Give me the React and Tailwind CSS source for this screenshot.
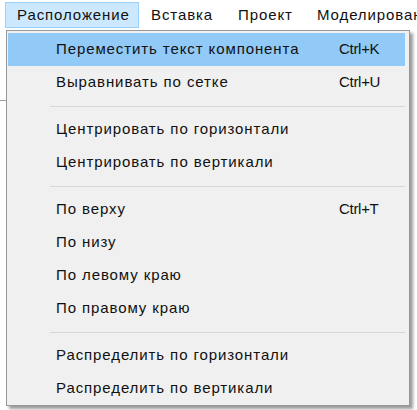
import React from "react";

const items = [
  { t: "Переместить текст компонента", k: "Ctrl+K", active: true },
  { t: "Выравнивать по сетке", k: "Ctrl+U" },
  { sep: true },
  { t: "Центрировать по горизонтали" },
  { t: "Центрировать по вертикали" },
  { sep: true },
  { t: "По верху", k: "Ctrl+T" },
  { t: "По низу" },
  { t: "По левому краю" },
  { t: "По правому краю" },
  { sep: true },
  { t: "Распределить по горизонтали" },
  { t: "Распределить по вертикали" },
];

export default function App() {
  return (
    <div
      className="relative w-[417px] h-[410px] bg-white overflow-hidden text-[15px] text-[#111]"
      style={{ fontFamily: '"Liberation Sans", Arial, sans-serif' }}
    >
      <div className="flex h-[30px] items-start pt-[2px] pl-[5px] whitespace-nowrap tracking-[0.9px]">
        <div className="shrink-0 w-[134px] h-[26px] flex items-center pl-[11px] pt-[1px] bg-[#cce8ff] border border-[#99d1ff]">Расположение</div>
        <div className="shrink-0 w-[87px] h-[26px] flex items-center pl-[12px] pt-[1px]">Вставка</div>
        <div className="shrink-0 w-[79px] h-[26px] flex items-center pl-[12px] pt-[1px]">Проект</div>
        <div className="shrink-0 h-[26px] flex items-center pl-[12px] pt-[1px]">Моделирование</div>
      </div>
      <div className="h-px w-[6px] bg-[#a0a0a0] mt-[70px]"></div>

      <div className="absolute left-[6px] top-[30px] w-[404px] bg-[#f0f0f0] border border-[#979797] pt-[2px] pl-[1px] pr-[4px] shadow-[3px_3px_3px_rgba(0,0,0,0.4)]">
        {items.map((it, i) =>
          it.sep ? (
            <div key={i} className="h-[14px] flex items-center pl-[42px]">
              <div className="h-px w-full bg-[#d7d7d7]"></div>
            </div>
          ) : (
            <div
              key={i}
              className={
                "h-[33px] flex items-center whitespace-nowrap " + (it.active ? "bg-[#91c9f7]" : "")
              }
            >
              <div className="w-[331px] pl-[48px] tracking-[0.9px]">{it.t}</div>
              <div className="tracking-[-0.3px]">{it.k}</div>
            </div>
          )
        )}
      </div>
    </div>
  );
}
